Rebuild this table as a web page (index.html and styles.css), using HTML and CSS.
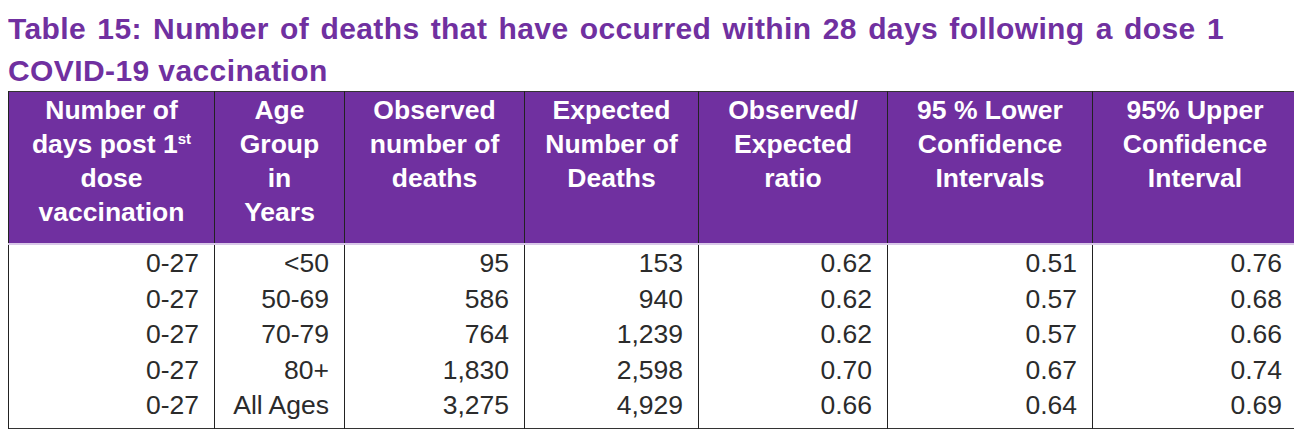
FILE: index.html
```html
<!DOCTYPE html>
<html>
<head>
<meta charset="utf-8">
<link rel="stylesheet" href="styles.css">
</head>
<body>
<h1 class="title">Table 15: Number of deaths that have occurred within 28 days following a dose 1 COVID-19 vaccination</h1>
<table class="data">
  <colgroup>
    <col class="c1"><col class="c2"><col class="c3"><col class="c4"><col class="c5"><col class="c6"><col class="c7">
  </colgroup>
  <thead>
    <tr>
      <th>Number of days post 1<sup>st</sup> dose vaccination</th>
      <th>Age Group in Years</th>
      <th>Observed number of deaths</th>
      <th>Expected Number of Deaths</th>
      <th>Observed/ Expected ratio</th>
      <th>95 % Lower Confidence Intervals</th>
      <th>95% Upper Confidence Interval</th>
    </tr>
  </thead>
  <tbody>
    <tr><td>0-27</td><td>&lt;50</td><td>95</td><td>153</td><td>0.62</td><td>0.51</td><td>0.76</td></tr>
    <tr><td>0-27</td><td>50-69</td><td>586</td><td>940</td><td>0.62</td><td>0.57</td><td>0.68</td></tr>
    <tr><td>0-27</td><td>70-79</td><td>764</td><td>1,239</td><td>0.62</td><td>0.57</td><td>0.66</td></tr>
    <tr><td>0-27</td><td>80+</td><td>1,830</td><td>2,598</td><td>0.70</td><td>0.67</td><td>0.74</td></tr>
    <tr><td>0-27</td><td>All Ages</td><td>3,275</td><td>4,929</td><td>0.66</td><td>0.64</td><td>0.69</td></tr>
  </tbody>
</table>
</body>
</html>
```

FILE: styles.css
```css
body {
  margin: 8px;
  background: #ffffff;
  font-family: "Liberation Sans", Arial, sans-serif;
}
.title {
  margin: 0;
  width: 1216px;
  font-size: 30px;
  line-height: 41.5px;
  font-weight: bold;
  letter-spacing: 0.4px;
  text-align: justify;
  color: #7030a0;
}
.data {
  border-collapse: collapse;
  width: 1290px;
  table-layout: fixed;
  border: 1px solid #333;
}
.c1 { width: 206px; }
.c2 { width: 130px; }
.c3 { width: 180px; }
.c4 { width: 174px; }
.c5 { width: 189px; }
.c6 { width: 205px; }
.c7 { width: 205px; }
.data th {
  background: #7030a0;
  color: #ffffff;
  font-size: 26.5px;
  font-weight: bold;
  line-height: 34px;
  height: 150px;
  vertical-align: top;
  text-align: center;
  padding: 1px 18px 0;
  border-left: 1px solid #222;
  border-right: 1px solid #222;
  border-bottom: 2px solid #d9c8e8;
}
.data th sup {
  font-size: 15px;
  line-height: 0;
  vertical-align: 9px;
}
.data td {
  font-size: 26.5px;
  line-height: 35.5px;
  color: #2b2b2b;
  text-align: right;
  padding: 0 15px 0 4px;
  border-left: 1px solid #222;
  border-right: 1px solid #222;
}
.data tbody tr:first-child td { padding-top: 1px; }
.data tbody tr:last-child td { padding-bottom: 4px; }
```
